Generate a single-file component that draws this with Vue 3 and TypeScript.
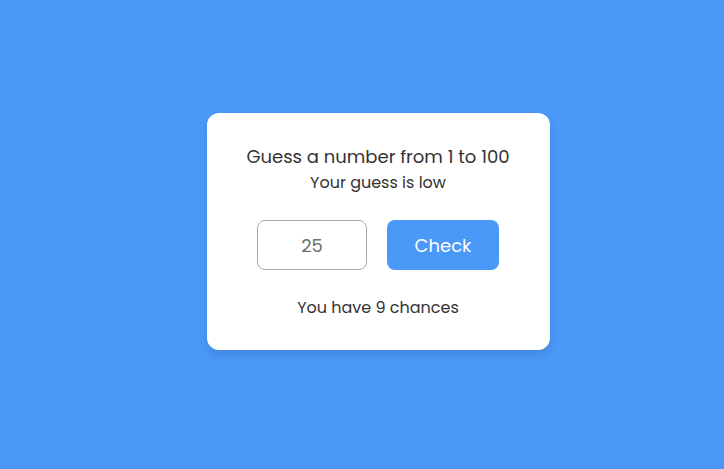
<script setup lang="ts">
import { computed, ref } from 'vue'

const guess = ref<number | string>(25)
const submitted = ref(true)
const chances = ref(9)
const target = 62
const result = ref('Your guess is low')

const chanceText = computed(() => `You have ${chances.value} chances`)

function check(): void {
  const value = Number(guess.value)
  if (!value || chances.value === 0) return
  chances.value--
  if (value === target) result.value = 'Congrats'
  else result.value = value > target ? 'Your guess is high' : 'Your guess is low'
  submitted.value = true
}
</script>

<template>
  <main class="page">
    <form class="card" @submit.prevent="check">
      <h1 class="title"><label for="guess">Guess a number from 1 to 100</label></h1>
      <p class="text">{{ result }}</p>
      <div class="field">
        <input
          id="guess"
          v-model="guess"
          class="guess"
          :class="{ muted: submitted }"
          type="number"
          min="1"
          max="100"
          @input="submitted = false"
        />
        <button class="check" type="submit">Check</button>
      </div>
      <p class="text">{{ chanceText }}</p>
    </form>
  </main>
</template>

<style>
body {
  background: #4a98f7;
}
</style>

<style scoped>
.page {
  display: flex;
  align-items: center;
  justify-content: center;
  box-sizing: border-box;
  min-height: 100vh;
  padding: 0 0 6px 32px;
  background: #4a98f7;
  color: #333;
  font-family: Poppins, Lato, "Open Sans", sans-serif;
}

.card {
  padding: 30px 40px;
  border-radius: 12px;
  background: #fff;
  text-align: center;
  box-shadow: 0 5px 10px rgba(0, 0, 0, 0.1);
}

.title {
  margin: 0;
  font-size: 18px;
  line-height: 28px;
  font-weight: 400;
}

.text {
  margin: 0;
  font-size: 16px;
  line-height: 24px;
}

.field {
  display: flex;
  justify-content: center;
  gap: 20px;
  margin: 25px 0 26px;
}

.guess,
.check {
  box-sizing: border-box;
  height: 50px;
  border-radius: 8px;
  font-family: inherit;
  font-size: 18px;
  text-align: center;
}

.guess {
  width: 110px;
  padding: 0;
  border: 1px solid #aaa;
  background: #fff;
  color: #333;
  outline: none;
  appearance: textfield;
}

.guess::-webkit-inner-spin-button,
.guess::-webkit-outer-spin-button {
  margin: 0;
  appearance: none;
}

.guess.muted {
  color: #707070;
}

.check {
  width: 112px;
  padding: 0;
  border: 0;
  background: #4a98f7;
  color: #fff;
  cursor: pointer;
}
</style>
